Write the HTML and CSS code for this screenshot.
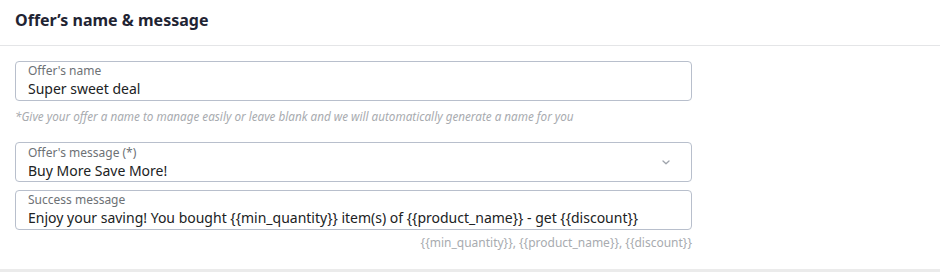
FILE: index.html
```html
<!DOCTYPE html>
<html>
<head>
<meta charset="utf-8">
<link rel="stylesheet" href="styles.css">
</head>
<body>
<section class="card">
  <header class="card-head">
    <h2 class="card-title">Offer’s name &amp; message</h2>
  </header>
  <div class="card-body">
    <div class="field">
      <span class="field-label">Offer's name</span>
      <span class="field-value">Super sweet deal</span>
    </div>
    <p class="hint">*Give your offer a name to manage easily or leave blank and we will automatically generate a name for you</p>
    <div class="field field-select">
      <div class="field-text">
        <span class="field-label">Offer's message (*)</span>
        <span class="field-value">Buy More Save More!</span>
      </div>
      <svg class="chevron" width="8" height="5" viewBox="0 0 8 5"><path d="M1 1 L4 3.8 L7 1" fill="none" stroke="#9ea3ab" stroke-width="1.3" stroke-linecap="round" stroke-linejoin="round"/></svg>
    </div>
    <div class="field">
      <span class="field-label">Success message</span>
      <span class="field-value">Enjoy your saving! You bought {{min_quantity}} item(s) of {{product_name}} - get {{discount}}</span>
    </div>
    <p class="vars">{{min_quantity}}, {{product_name}}, {{discount}}</p>
  </div>
</section>
</body>
</html>
```
FILE: styles.css
```css
* { box-sizing: border-box; }
html, body { margin: 0; padding: 0; background: #fff; }
body {
  font-family: "Noto Sans", "Open Sans", sans-serif;
  color: #202223;
  width: 940px;
  height: 272px;
  overflow: hidden;
}
.card {
  border-bottom: 3px solid #ebebeb;
  height: 272px;
}
.card-head {
  height: 46px;
  border-bottom: 1px solid #e4e5e7;
  padding: 8px 15px 0;
}
.card-title {
  margin: 0;
  font-size: 16px;
  font-weight: 700;
  line-height: 24px;
  color: #1f2433;
}
.card-body {
  padding: 15px 248px 0 15px;
  display: flex;
  flex-direction: column;
}
.field {
  border: 1px solid #b8bfcc;
  border-radius: 4px;
  height: 40px;
  padding: 1px 12px 0;
  display: flex;
  flex-direction: column;
}
.field-select {
  flex-direction: row;
  align-items: center;
}
.field-text { flex: 1; display: flex; flex-direction: column; padding-top: 1px; align-self: flex-start; }
.chevron { margin-right: 9px; }
.field-label {
  font-size: 12px;
  line-height: 16px;
  color: #6d7175;
}
.field-value {
  font-size: 14px;
  line-height: 20px;
  color: #202223;
  white-space: nowrap;
}
.hint {
  margin: 7px 0 17px;
  font-size: 11.7px;
  line-height: 17px;
  font-style: italic;
  color: #a8abaf;
  white-space: nowrap;
}
.field + .field { margin-top: 8px; }
.vars {
  margin: 4px 0 0;
  text-align: right;
  font-size: 12px;
  line-height: 17px;
  color: #a8abaf;
}
```
